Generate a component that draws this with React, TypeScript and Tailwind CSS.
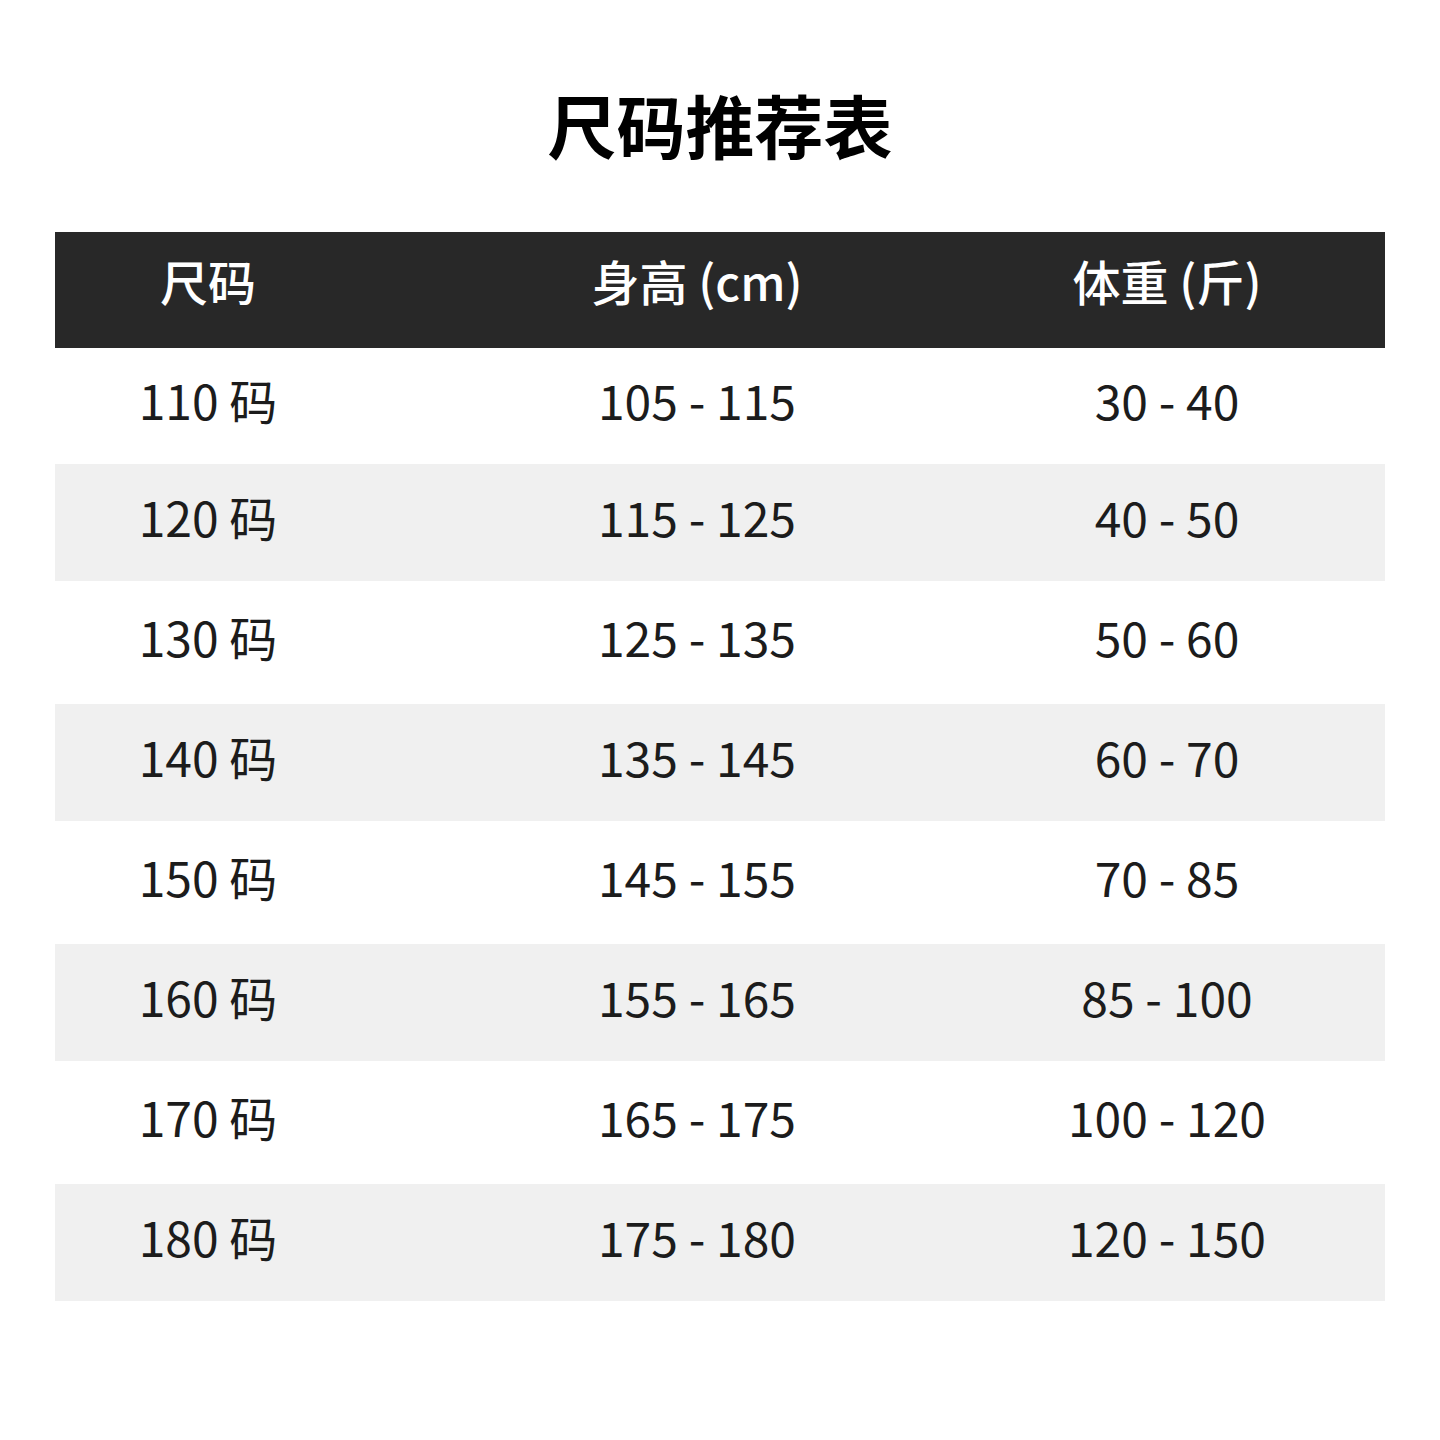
const rows = [
  ["110 码", "105 - 115", "30 - 40"],
  ["120 码", "115 - 125", "40 - 50"],
  ["130 码", "125 - 135", "50 - 60"],
  ["140 码", "135 - 145", "60 - 70"],
  ["150 码", "145 - 155", "70 - 85"],
  ["160 码", "155 - 165", "85 - 100"],
  ["170 码", "165 - 175", "100 - 120"],
  ["180 码", "175 - 180", "120 - 150"],
];

const font = "font-['Noto_Sans_CJK_SC','Noto_Sans',sans-serif]";

export default function App() {
  return (
    <div className={`w-[1440px] h-[1440px] bg-white ${font}`}>
      <h1 className="pt-[90px] text-center text-[69px] leading-none font-bold text-black">
        尺码推荐表
      </h1>

      <div className="mx-[55px] mt-[73px]">
        <div className="grid grid-cols-[306px_672px_1fr] pr-[84px] pb-[20px] h-[116px] items-center bg-[#282828] text-white text-[48px] font-medium">
          <div className="text-center">尺码</div>
          <div className="text-center">身高 (cm)</div>
          <div className="text-center">体重 (斤)</div>
        </div>

        {rows.map((r, i) => (
          <div
            key={r[0]}
            className={
              "grid grid-cols-[306px_672px_1fr] pr-[84px] pb-[14px] items-center text-[48px] text-[#1c1c1c] " +
              (i % 2 === 1 ? "bg-[#f0f0f0] h-[117px]" : i === 0 ? "bg-white h-[116px]" : "bg-white h-[123px]")
            }
          >
            <div className="text-center">{r[0]}</div>
            <div className="text-center">{r[1]}</div>
            <div className="text-center">{r[2]}</div>
          </div>
        ))}
      </div>
    </div>
  );
}
